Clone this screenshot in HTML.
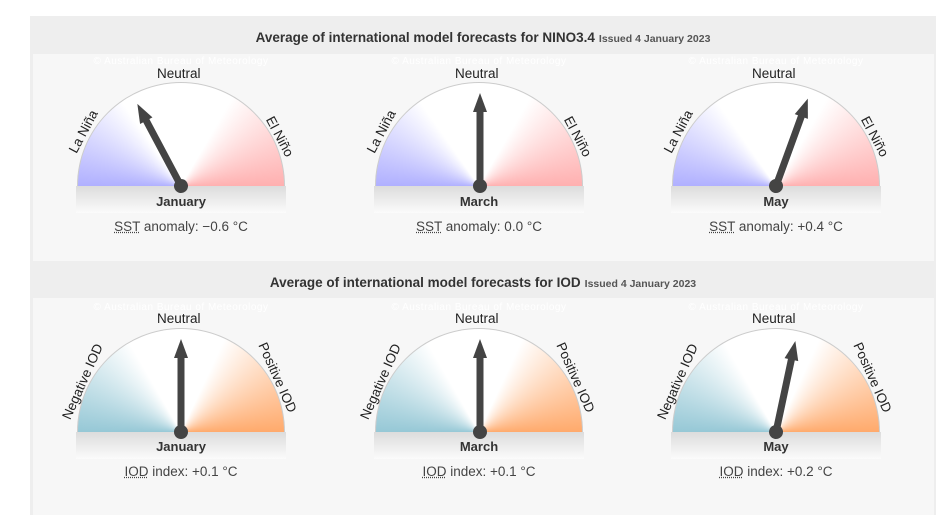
<!DOCTYPE html>
<html><head><meta charset="utf-8"><style>
body{margin:0;width:949px;height:515px;background:#fff;position:relative;overflow:hidden;font-family:"Liberation Sans",Arial,sans-serif;}
.box{position:absolute;left:30px;top:16px;width:906px;height:499px;background:#eee;}
.panel{position:absolute;left:33px;width:901px;background:#f7f7f7;}
.title{position:absolute;left:30px;width:906px;text-align:center;font-size:13.5px;font-weight:bold;color:#333;}
.title span{font-size:10.5px;color:#555;margin-left:4px;}
.g{position:absolute;width:208px;height:104px;border:1px solid #ccc;border-bottom:none;border-radius:105px 105px 0 0;box-sizing:border-box;}
.band{position:absolute;width:210px;height:27px;background:linear-gradient(#dcdcdc,#fbfbfb);}
.lbl{position:absolute;font-size:13.5px;color:#222;white-space:nowrap;transform-origin:center;}
.mon{position:absolute;width:210px;text-align:center;font-size:13px;font-weight:bold;color:#333;}
.val{position:absolute;width:210px;text-align:center;font-size:13.5px;color:#444;}
.val u{text-decoration:underline dotted;}
.cp{position:absolute;width:210px;text-align:center;font-size:10px;color:#fff;letter-spacing:.5px;}
</style></head><body>
<div class="box"></div>
<div class="panel" style="top:54px;height:207px"></div>
<div class="panel" style="top:298px;height:217px"></div>
<div class="title" style="top:30px">Average of international model forecasts for NINO3.4<span>Issued 4 January 2023</span></div>
<div class="title" style="top:275px">Average of international model forecasts for IOD<span>Issued 4 January 2023</span></div>

<div class="g" style="left:77px;top:82px;background:conic-gradient(from -90deg at 50% 100%,#b0b0ff 0deg,#fff 55deg,#fff 120deg,#ffb0b0 180deg)"></div>
<div class="g" style="left:375px;top:82px;background:conic-gradient(from -90deg at 50% 100%,#b0b0ff 0deg,#fff 55deg,#fff 120deg,#ffb0b0 180deg)"></div>
<div class="g" style="left:672px;top:82px;background:conic-gradient(from -90deg at 50% 100%,#b0b0ff 0deg,#fff 55deg,#fff 120deg,#ffb0b0 180deg)"></div>
<div class="band" style="left:76px;top:186px"></div>
<div class="band" style="left:374px;top:186px"></div>
<div class="band" style="left:671px;top:186px"></div>

<div class="g" style="left:77px;top:328px;background:conic-gradient(from -90deg at 50% 100%,#96c8d6 0deg,#fff 60deg,#fff 115deg,#ffaa6c 180deg)"></div>
<div class="g" style="left:375px;top:328px;background:conic-gradient(from -90deg at 50% 100%,#96c8d6 0deg,#fff 60deg,#fff 115deg,#ffaa6c 180deg)"></div>
<div class="g" style="left:672px;top:328px;background:conic-gradient(from -90deg at 50% 100%,#96c8d6 0deg,#fff 60deg,#fff 115deg,#ffaa6c 180deg)"></div>
<div class="band" style="left:76px;top:432px"></div>
<div class="band" style="left:374px;top:432px"></div>
<div class="band" style="left:671px;top:432px"></div>

<div class="cp" style="left:76px;top:56px">© Australian Bureau of Meteorology</div>
<div class="cp" style="left:374px;top:56px">© Australian Bureau of Meteorology</div>
<div class="cp" style="left:671px;top:56px">© Australian Bureau of Meteorology</div>
<div class="cp" style="left:76px;top:302px">© Australian Bureau of Meteorology</div>
<div class="cp" style="left:374px;top:302px">© Australian Bureau of Meteorology</div>
<div class="cp" style="left:671px;top:302px">© Australian Bureau of Meteorology</div>

<div class="lbl" style="left:157px;top:66px">Neutral</div>
<div class="lbl" style="left:455px;top:66px">Neutral</div>
<div class="lbl" style="left:752px;top:66px">Neutral</div>
<div class="lbl" style="left:60px;top:124px;transform:rotate(-62deg)">La Niña</div>
<div class="lbl" style="left:358px;top:124px;transform:rotate(-62deg)">La Niña</div>
<div class="lbl" style="left:655px;top:124px;transform:rotate(-62deg)">La Niña</div>
<div class="lbl" style="left:258px;top:129px;transform:rotate(62deg)">El Niño</div>
<div class="lbl" style="left:556px;top:129px;transform:rotate(62deg)">El Niño</div>
<div class="lbl" style="left:853px;top:129px;transform:rotate(62deg)">El Niño</div>
<div class="lbl" style="left:157px;top:311px">Neutral</div>
<div class="lbl" style="left:455px;top:311px">Neutral</div>
<div class="lbl" style="left:752px;top:311px">Neutral</div>
<div class="lbl" style="left:42px;top:374px;transform:rotate(-66deg)">Negative IOD</div>
<div class="lbl" style="left:340px;top:374px;transform:rotate(-66deg)">Negative IOD</div>
<div class="lbl" style="left:637px;top:374px;transform:rotate(-66deg)">Negative IOD</div>
<div class="lbl" style="left:240px;top:370px;transform:rotate(66deg)">Positive IOD</div>
<div class="lbl" style="left:538px;top:370px;transform:rotate(66deg)">Positive IOD</div>
<div class="lbl" style="left:835px;top:370px;transform:rotate(66deg)">Positive IOD</div>

<svg style="position:absolute;left:0;top:0" width="949" height="515">
<defs><g id="n"><rect x="-3.5" y="-76" width="7" height="76" fill="#444"/><polygon points="-7,-74 7,-74 0,-93" fill="#444"/><circle r="7" fill="#444"/></g></defs>
<use href="#n" transform="translate(181,186) rotate(-28)"/>
<use href="#n" transform="translate(480,186)"/>
<use href="#n" transform="translate(776,186) rotate(20)"/>
<use href="#n" transform="translate(181,432)"/>
<use href="#n" transform="translate(480,432)"/>
<use href="#n" transform="translate(776,432) rotate(12)"/>
</svg>

<div class="mon" style="left:76px;top:194px">January</div>
<div class="mon" style="left:374px;top:194px">March</div>
<div class="mon" style="left:671px;top:194px">May</div>
<div class="mon" style="left:76px;top:439px">January</div>
<div class="mon" style="left:374px;top:439px">March</div>
<div class="mon" style="left:671px;top:439px">May</div>

<div class="val" style="left:76px;top:219px"><u>SST</u> anomaly: −0.6 °C</div>
<div class="val" style="left:374px;top:219px"><u>SST</u> anomaly: 0.0 °C</div>
<div class="val" style="left:671px;top:219px"><u>SST</u> anomaly: +0.4 °C</div>
<div class="val" style="left:76px;top:464px"><u>IOD</u> index: +0.1 °C</div>
<div class="val" style="left:374px;top:464px"><u>IOD</u> index: +0.1 °C</div>
<div class="val" style="left:671px;top:464px"><u>IOD</u> index: +0.2 °C</div>
</body></html>
